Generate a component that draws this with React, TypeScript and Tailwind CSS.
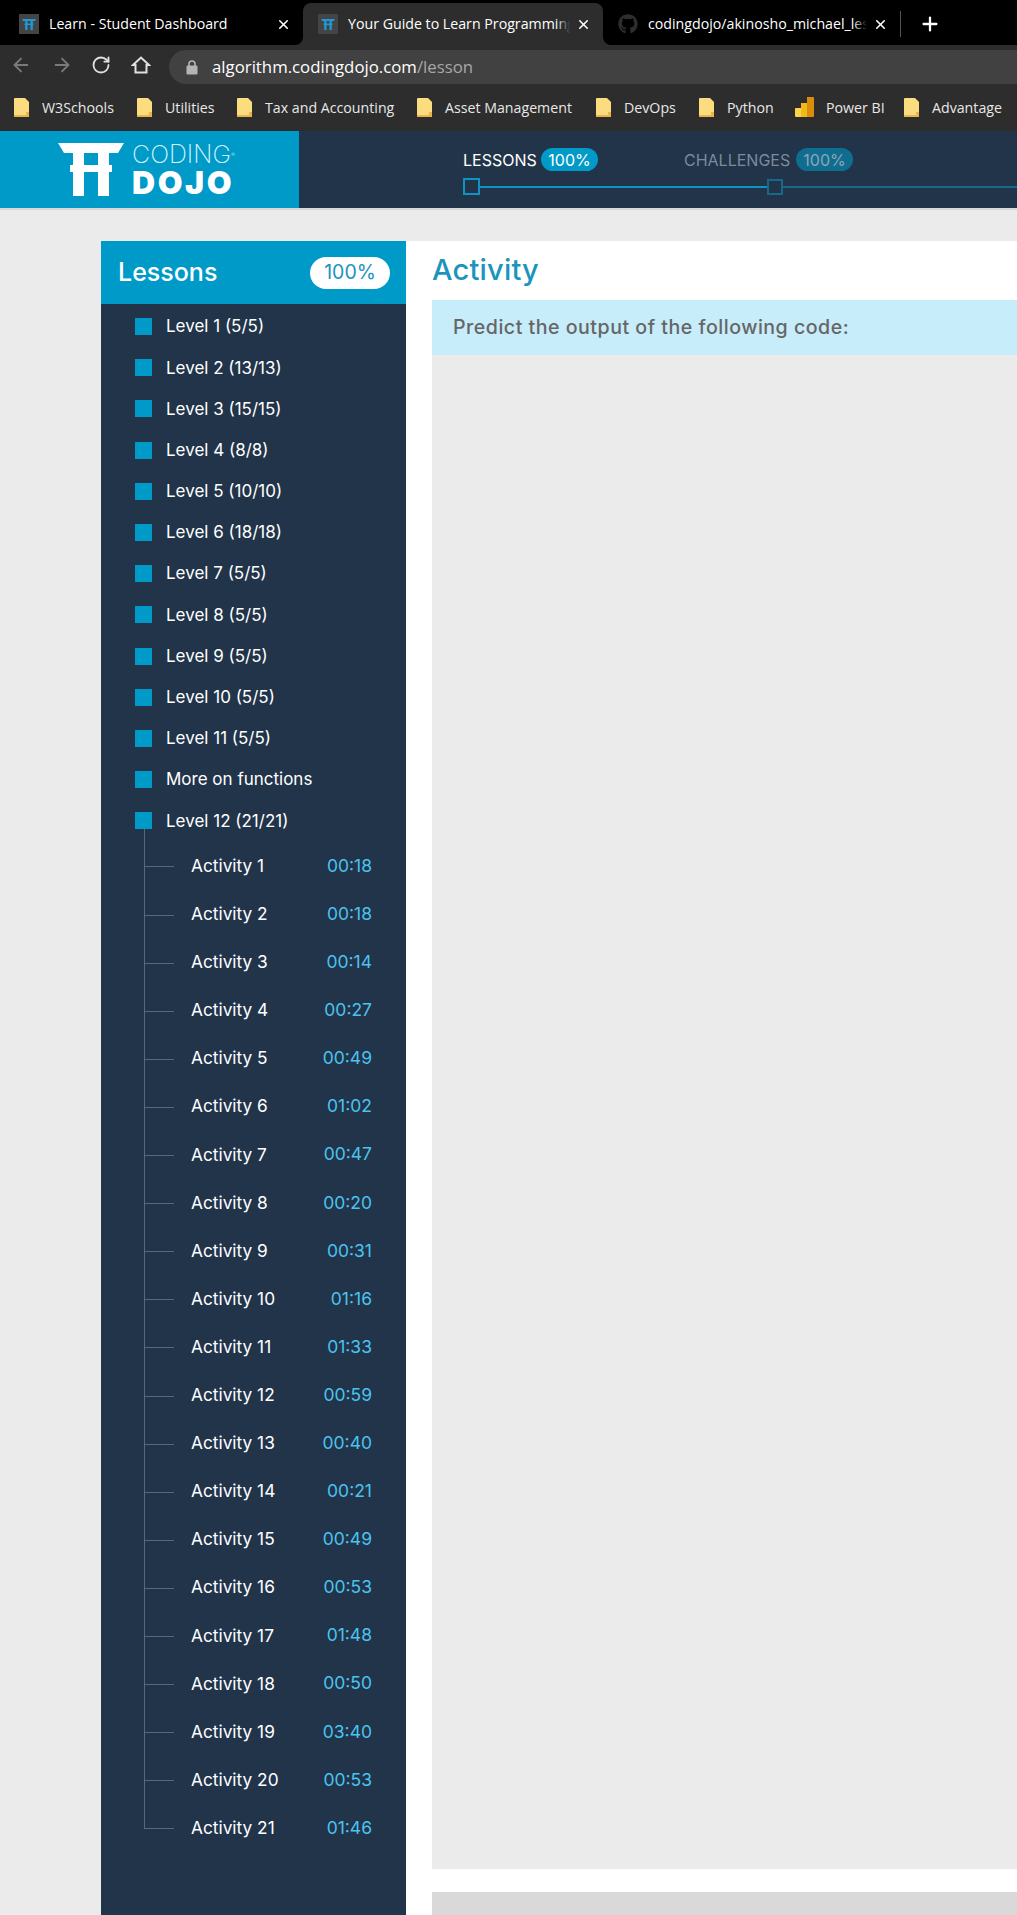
import React from 'react';
import { ArrowLeft, ArrowRight, RotateCw, X, Plus } from 'lucide-react';
import { FaGithub } from 'react-icons/fa';

const levels = [
  'Level 1 (5/5)', 'Level 2 (13/13)', 'Level 3 (15/15)', 'Level 4 (8/8)', 'Level 5 (10/10)', 'Level 6 (18/18)',
  'Level 7 (5/5)', 'Level 8 (5/5)', 'Level 9 (5/5)', 'Level 10 (5/5)', 'Level 11 (5/5)', 'More on functions', 'Level 12 (21/21)',
];

const times = [
  '00:18', '00:18', '00:14', '00:27', '00:49', '01:02', '00:47', '00:20', '00:31', '01:16', '01:33',
  '00:59', '00:40', '00:21', '00:49', '00:53', '01:48', '00:50', '03:40', '00:53', '01:46',
];

const bookmarks = [
  { name: 'W3Schools', w: 'w-[123px]' },
  { name: 'Utilities', w: 'w-[100px]' },
  { name: 'Tax and Accounting', w: 'w-[180px]' },
  { name: 'Asset Management', w: 'w-[179px]' },
  { name: 'DevOps', w: 'w-[103px]' },
  { name: 'Python', w: 'w-[96px]' },
  { name: 'Power BI', w: 'w-[109px]', bi: true },
  { name: 'Advantage', w: 'w-[113px]' },
];

const Torii = ({ className }: { className: string }) => (
  <svg viewBox="0 0 66 53" className={className} fill="currentColor">
    <path d="M0 0 H66 L60 10 H6 Z" />
    <path d="M12 22 H54 V29 H12 Z" />
    <path d="M15 9 H26 V53 H15 Z" />
    <path d="M40 9 H51 V53 H40 Z" />
  </svg>
);

const Favicon = () => (
  <div className="w-5 h-5 bg-[#444] flex items-center justify-center shrink-0">
    <Torii className="w-[14px] h-[13px] text-[#1f9ad6]" />
  </div>
);

const Folder = () => (
  <svg viewBox="0 0 16 19" className="w-[16px] h-[19px] shrink-0">
    <path d="M1 0 H11 L15 4 V18 Q15 19 14 19 H1 Q0 19 0 18 V1 Q0 0 1 0 Z" fill="#fbdc7f" />
    <path d="M0 17 H15 V18 Q15 19 14 19 H1 Q0 19 0 18 Z" fill="#eab54a" />
    <path d="M12 14 H15 V19 H12 Z" fill="#eab54a" />
  </svg>
);

const PowerBI = () => (
  <svg viewBox="0 0 19 20" className="w-[19px] h-[20px] shrink-0">
    <path d="M1 11 H8 V20 H1 Q0 20 0 19 V12 Q0 11 1 11 Z" fill="#fcd34d" />
    <path d="M6 6 H13 V20 H6 Z" fill="#f2b91d" />
    <path d="M12 0 H18 Q19 0 19 1 V19 Q19 20 18 20 H12 Z" fill="#d98e0b" />
  </svg>
);

const HomeIcon = () => (
  <svg viewBox="0 0 20 20" className="w-[20px] h-[20px] ml-[20px]" fill="none" stroke="#e0e0e0" strokeWidth="2">
    <path d="M2 10 L10 2.5 L18 10 H15.5 V17.5 H4.5 V10 Z" strokeLinejoin="miter" />
  </svg>
);

const LockIcon = () => (
  <svg viewBox="0 0 12 15" className="w-[12px] h-[15px]">
    <path d="M3 6 V4 A3 3 0 0 1 9 4 V6" fill="none" stroke="#b5b5b5" strokeWidth="1.6" />
    <rect x="0.5" y="5.5" width="11" height="9" rx="1.2" fill="#b5b5b5" />
  </svg>
);

const Tab = ({ title, w, active, github }: { title: string; w: string; active?: boolean; github?: boolean }) => (
  <div className={`${w} relative h-[42px] pl-[15px] pr-[12px] flex items-center rounded-t-lg ${active ? 'bg-[#2d2d2d]' : ''}`}>
    {active && (
      <>
        <div className="absolute -left-2 bottom-0 w-2 h-2 bg-[#2d2d2d]"><div className="w-2 h-2 bg-black rounded-br-lg" /></div>
        <div className="absolute -right-2 bottom-0 w-2 h-2 bg-[#2d2d2d]"><div className="w-2 h-2 bg-black rounded-bl-lg" /></div>
      </>
    )}
    {github ? <FaGithub className="w-5 h-5 text-[#2e2e2e] shrink-0" /> : <Favicon />}
    <div className="relative ml-[10px] flex-1 overflow-hidden whitespace-nowrap text-[14.2px] text-white">
      {title}
      <div className={`absolute right-0 top-0 bottom-0 w-[14px] bg-gradient-to-r from-transparent ${active ? 'to-[#2d2d2d]' : 'to-black'}`} />
    </div>
    <X className="w-[15px] h-[15px] text-white shrink-0 ml-[6px]" strokeWidth={2.5} />
  </div>
);

const App = () => {
  return (
    <div className="w-[1017px] h-[1915px] overflow-hidden bg-[#ebebeb] font-['Inter',sans-serif]">
      {/* browser chrome */}
      <div className="h-[45px] bg-black flex items-end pl-[4px] font-['Open_Sans',sans-serif]">
        <Tab title="Learn - Student Dashboard" w="w-[299px]" />
        <Tab title="Your Guide to Learn Programming" w="w-[300px]" active />
        <Tab title="codingdojo/akinosho_michael_lesson" w="w-[297px]" github />
        <div className="w-px h-[26px] mb-[8px] bg-[#555]" />
        <Plus className="w-[22px] h-[22px] text-white ml-[18px] mb-[10px]" strokeWidth={2.5} />
      </div>
      <div className="h-[39px] bg-[#2d2d2d] flex items-center pl-[10px] font-['Open_Sans',sans-serif]">
        <ArrowLeft className="w-[22px] h-[22px] text-[#7a7a7a]" />
        <ArrowRight className="w-[22px] h-[22px] text-[#7a7a7a] ml-[19px]" />
        <RotateCw className="w-[20px] h-[20px] text-[#e0e0e0] ml-[18px]" strokeWidth={2.2} />
        <HomeIcon />
        <div className="flex-1 ml-[18px] h-[34px] self-end bg-[#414141] rounded-l-[17px] flex items-center pl-[17px]">
          <LockIcon />
          <span className="ml-[14px] text-[16.8px] text-white">algorithm.codingdojo.com<span className="text-[#a8a8a8]">/lesson</span></span>
        </div>
      </div>
      <div className="h-[47px] bg-[#2d2d2d] flex items-center pl-[14px] font-['Open_Sans',sans-serif]">
        {bookmarks.map((b) => (
          <div key={b.name} className={`${b.w} flex items-center gap-[12px] shrink-0`}>
            {b.bi ? <PowerBI /> : <Folder />}
            <span className="text-[14.2px] text-[#e8e8e8] whitespace-nowrap">{b.name}</span>
          </div>
        ))}
      </div>

      {/* site header */}
      <div className="h-[79px] bg-[#21344a] border-b-2 border-[#d5d9dc] flex">
        <div className="w-[299px] bg-[#009ac9] flex items-center pl-[58px] text-white">
          <Torii className="w-[66px] h-[53px] text-white" />
          <div className="ml-[8px] flex flex-col leading-none">
            <span className="text-[25px] font-extralight text-[#d8f2fa] h-[27px] leading-[27px]">CODING<span className="text-[6px] align-top">®</span></span>
            <span className="text-[32px] font-black tracking-[0.08em] h-[30px] leading-[30px]">DOJO</span>
          </div>
        </div>
        <div className="flex-1 pl-[164px] pt-[17px]">
          <div className="flex items-center h-[23px]">
            <span className="text-[16px] text-white w-[78px] whitespace-nowrap">LESSONS</span>
            <span className="w-[57px] h-[23px] rounded-full bg-[#009ac9] text-white text-[16px] flex items-center justify-center">100%</span>
            <span className="text-[16px] text-[#7d8a99] ml-[86px] w-[112px] whitespace-nowrap">CHALLENGES</span>
            <span className="w-[57px] h-[23px] rounded-full bg-[#0f6d8f] text-[#8fa5b3] text-[16px] flex items-center justify-center">100%</span>
          </div>
          <div className="flex items-center mt-[7px]">
            <div className="w-[17px] h-[17px] border-2 border-[#0f93c0] shrink-0" />
            <div className="w-[287px] h-[2px] bg-[#0f93c0]" />
            <div className="w-[16px] h-[16px] border-2 border-[#17698a] shrink-0" />
            <div className="flex-1 h-[2px] bg-[#17698a]" />
          </div>
        </div>
      </div>

      {/* page */}
      <div className="flex pl-[101px] pt-[31px]">
        <aside className="w-[305px] h-[1674px] shrink-0 bg-[#21344a]">
          <div className="h-[63px] bg-[#009ac9] flex items-center justify-between pl-[17px] pr-[16px]">
            <span className="text-[25px] font-medium text-white">Lessons</span>
            <span className="w-[80px] h-[32px] rounded-full bg-white text-[#1c94bd] text-[19.5px] flex items-center justify-center">100%</span>
          </div>
          <div className="pt-[2px]">
            {levels.map((l) => (
              <div key={l} className="h-[41.2px] flex items-center pl-[34px]">
                <div className="w-[17px] h-[17px] bg-[#009ac9] shrink-0" />
                <span className="ml-[14px] mt-[1px] text-[17px] text-white whitespace-nowrap">{l}</span>
              </div>
            ))}
          </div>
          <div className="pl-[43px] pr-[34px] -mt-[12px]">
            <div className="h-[14px] border-l border-[#58677a]" />
            {times.map((t, i) => (
              <div key={i} className="h-[48.1px] flex items-stretch">
                <div className="w-[30px] flex flex-col shrink-0">
                  <div className="h-1/2 border-l border-b border-[#58677a]" />
                  {i < times.length - 1 && <div className="h-1/2 border-l border-[#58677a]" />}
                </div>
                <div className="flex-1 flex items-center justify-between pl-[17px] pb-[3px]">
                  <span className="text-[17.3px] text-white">Activity {i + 1}</span>
                  <span className="text-[17.5px] text-[#4bc3ef]">{t}</span>
                </div>
              </div>
            ))}
          </div>
        </aside>
        <main className="flex-1 h-[1674px] bg-white pl-[26px]">
          <h1 className="h-[59px] pt-[11px] text-[29px] font-medium tracking-[0.2px] leading-[36px] text-[#1c94bd]">Activity</h1>
          <div className="h-[55px] bg-[#c7edfb] flex items-center pl-[21px] text-[19.6px] tracking-[0.5px] font-medium text-[#666]">
            Predict the output of the following code:
          </div>
          <div className="h-[1514px] bg-[#ebebeb]" />
          <div className="h-[23px] bg-white" />
          <div className="h-[30px] bg-[#d9d9d9]" />
        </main>
      </div>
    </div>
  );
};

export default App;
